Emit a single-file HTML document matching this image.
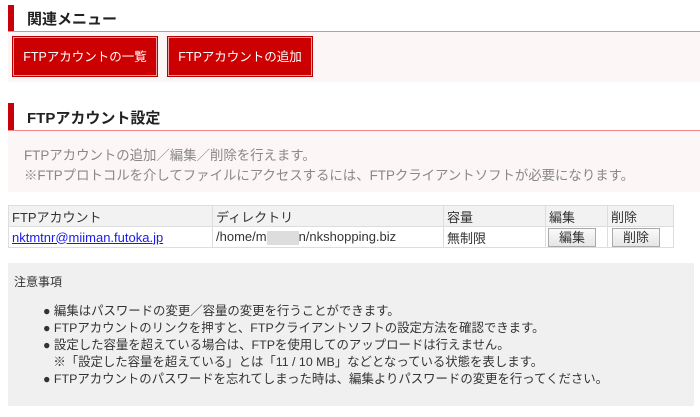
<!DOCTYPE html>
<html><head><meta charset="utf-8"><style>
*{margin:0;padding:0;box-sizing:border-box}
body{width:700px;height:417px;background:#fff;font-family:"Liberation Sans","Noto Sans CJK JP",sans-serif;font-size:12px;color:#333;position:relative;overflow:hidden}
.a{position:absolute;white-space:nowrap}
.h{font-size:15px;font-weight:bold;color:#222}
.bar{position:absolute;background:#c9000a;width:6px}
.line{position:absolute;left:8px;right:0;height:1px;background:#e88}
.btn{position:absolute;background:#cc0000;color:#fff;border:1px solid #f0a0a0;outline:1px solid #b00;font-size:12.5px;text-align:center;line-height:38px}
table{position:absolute;left:8px;top:205px;width:666px;border-collapse:collapse;font-size:13px}
td{border:1px solid #ddd;padding:0 3px;height:21px}
tr.hd td{background:#f2f2f2}
.sb{display:inline-block;border:1px solid #aaa;background:linear-gradient(#fafafa,#e6e6e6);padding:0 10px;line-height:17px;font-size:13px}
</style></head><body>
<div class="bar" style="left:8px;top:5px;height:26px"></div>
<div class="a h" style="left:27px;top:8px">関連メニュー</div>
<div class="line" style="top:31px"></div>
<div class="a" style="left:8px;top:32px;width:692px;height:50px;background:#fdf6f6"></div>
<div class="btn" style="left:13px;top:37px;width:144px;height:39px">FTPアカウントの一覧</div>
<div class="btn" style="left:168px;top:37px;width:144px;height:39px">FTPアカウントの追加</div>
<div class="bar" style="left:8px;top:103px;height:27px"></div>
<div class="a h" style="left:27px;top:107px">FTPアカウント設定</div>
<div class="line" style="top:130px"></div>
<div class="a" style="left:8px;top:131px;width:692px;height:61px;background:#fdf6f6"></div>
<div class="a" style="left:24px;top:144px;color:#888;font-size:13.4px">FTPアカウントの追加／編集／削除を行えます。</div>
<div class="a" style="left:24px;top:164px;color:#888;font-size:13.4px">※FTPプロトコルを介してファイルにアクセスするには、FTPクライアントソフトが必要になります。</div>
<table>
<tr class="hd"><td style="width:204px">FTPアカウント</td><td style="width:231px">ディレクトリ</td><td style="width:102px">容量</td><td style="width:62px">編集</td><td>削除</td></tr>
<tr><td><span style="color:#1a1aee;text-decoration:underline">nktmtnr@miiman.futoka.jp</span></td><td>/home/m<span style="display:inline-block;width:32px;height:14px;background:#ddd;vertical-align:middle"></span>n/nkshopping.biz</td><td>無制限</td><td style="padding-left:2px"><span class="sb">編集</span></td><td style="padding-left:4px"><span class="sb">削除</span></td></tr>
</table>
<div class="a" style="left:8px;top:263px;width:686px;height:143px;background:#f0f0f0"></div>
<div class="a" style="left:14px;top:273px">注意事項</div>
<div class="a" style="left:43px;top:303px;line-height:17px;font-size:12.4px">
● 編集はパスワードの変更／容量の変更を行うことができます。<br>
● FTPアカウントのリンクを押すと、FTPクライアントソフトの設定方法を確認できます。<br>
● 設定した容量を超えている場合は、FTPを使用してのアップロードは行えません。<br>
&nbsp;&nbsp;&nbsp;※「設定した容量を超えている」とは「11 / 10 MB」などとなっている状態を表します。<br>
● FTPアカウントのパスワードを忘れてしまった時は、編集よりパスワードの変更を行ってください。
</div>
</body></html>
